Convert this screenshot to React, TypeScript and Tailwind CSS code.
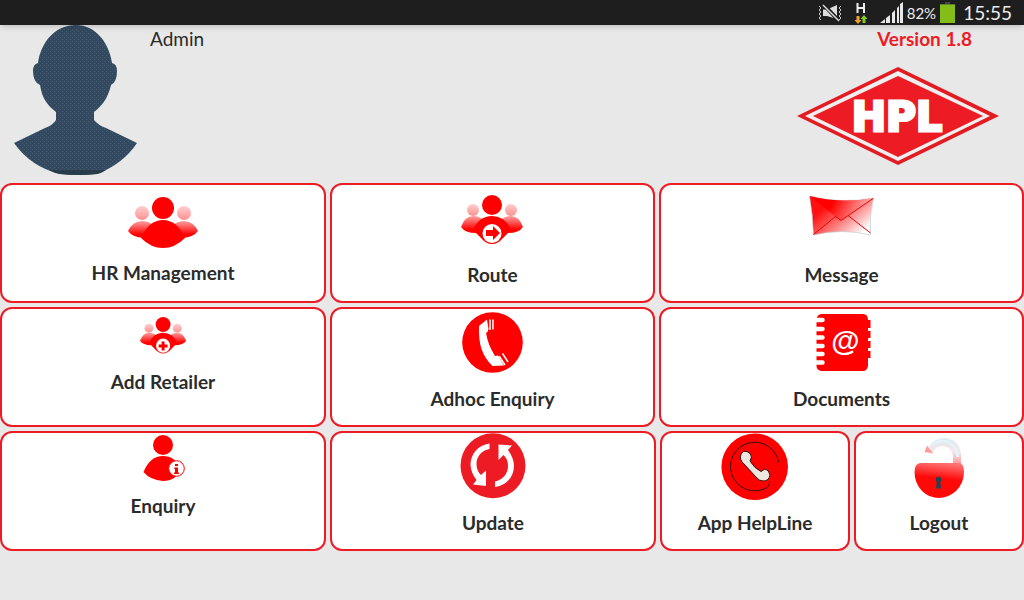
import type { ReactNode } from "react";

type TileProps = {
  label: string;
  iconClass?: string;
  children: ReactNode;
};

const Tile = ({ label, iconClass = "h-[78px]", children }: TileProps) => (
  <button
    type="button"
    className="flex h-[120px] min-w-0 flex-col items-center rounded-xl border-2 border-[#ed1c24] bg-white"
  >
    <span className={`block w-24 shrink-0 ${iconClass}`}>{children}</span>
    <span className="text-[19px] leading-6 font-bold whitespace-nowrap">{label}</span>
  </button>
);

const svgClass = "block h-full w-full overflow-visible";

const HrIcon = () => (
  <svg viewBox="0 0 96 76" className={svgClass} aria-hidden="true">
    <defs>
      <linearGradient id="fade" x1="0" y1="0" x2="0" y2="1">
        <stop offset="0" stopColor="#ffa0a0" />
        <stop offset="0.8" stopColor="#ff0000" />
      </linearGradient>
      <linearGradient id="pale" x1="0" y1="0" x2="0" y2="1">
        <stop offset="0" stopColor="#ffd0d0" />
        <stop offset="1" stopColor="#ff9090" />
      </linearGradient>
    </defs>
    <circle cx="27" cy="28" r="7" fill="url(#pale)" />
    <circle cx="69" cy="28" r="7" fill="url(#pale)" />
    <path d="M13 46 Q18 36 27 36 Q33 36 38 40 L29 53 Q17 52 13 46Z" fill="url(#fade)" />
    <path d="M83 46 Q78 36 69 36 Q63 36 58 40 L67 53 Q79 52 83 46Z" fill="url(#fade)" />
    <path d="M26 53 Q34 35 48 35 Q62 35 70 53 Q60 63 48 63 Q36 63 26 53Z" fill="#f00" />
    <circle cx="48" cy="23" r="11" fill="#f00" />
  </svg>
);

// group of three people, 62 x 49, with a white badge at the bottom
const People = ({ children }: { children: ReactNode }) => (
  <>
    <circle cx="12" cy="15" r="6" fill="url(#pale)" />
    <circle cx="50" cy="15" r="6" fill="url(#pale)" />
    <path d="M0 32 Q4 21 12 21 Q19 21 23 26 L15 38 Q4 38 0 32Z" fill="url(#fade)" />
    <path d="M62 32 Q58 21 50 21 Q43 21 39 26 L47 38 Q58 38 62 32Z" fill="url(#fade)" />
    <path d="M12 35 Q18 21 31 21 Q44 21 50 35 L42 43 Q37 49 31 49 Q25 49 20 43Z" fill="#f00" />
    <circle cx="31" cy="10" r="10" fill="#f00" />
    <circle cx="31" cy="38.500" r="9.500" fill="#fff" />
    {children}
  </>
);

const RouteIcon = () => (
  <svg viewBox="0 0 96 78" className={svgClass} aria-hidden="true">
    <g transform="translate(16 10)">
      <People>
        <path d="M25 35h7v-4l7 7-7 7v-4h-7z" fill="#f00" />
      </People>
    </g>
  </svg>
);

const RetailerIcon = () => (
  <svg viewBox="0 0 96 61" className={svgClass} aria-hidden="true">
    <g transform="translate(25 8) scale(0.745)">
      <People>
        <path d="M29 33h4v4h4v4h-4v4h-4v-4h-4v-4h4z" fill="#f00" />
      </People>
    </g>
  </svg>
);

const MessageIcon = () => (
  <svg viewBox="0 0 96 78" className={svgClass} aria-hidden="true">
    <defs>
      <linearGradient id="paper" x1="0" y1="0" x2="1" y2="0.7">
        <stop offset="0.3" stopColor="#ff1010" />
        <stop offset="0.65" stopColor="#ff8080" />
        <stop offset="1" stopColor="#fff" />
      </linearGradient>
      <linearGradient id="flap" x1="0" y1="0" x2="1" y2="0.2">
        <stop offset="0.4" stopColor="#f00" />
        <stop offset="1" stopColor="#ffb8b8" />
      </linearGradient>
    </defs>
    <path
      d="M15.500 11 Q47 19 79.500 13 Q75 31 76.500 50 Q48 43 19.500 50 Q19 30 15.500 11Z"
      fill="url(#paper)"
      stroke="#b9c6cc"
      strokeWidth="0.600"
    />
    <path d="M15.500 11 Q47 19 79.500 13 L54 30.500 47 35.500 41.500 31.500Z" fill="url(#flap)" />
    <path
      d="M19.500 49.500 L41.500 31.500 L47 35.500 L79 13.500 M54 30.500 L76.500 48"
      fill="none"
      stroke="#e80000"
      strokeWidth="1"
    />
  </svg>
);

const PhoneIcon = () => (
  <svg viewBox="0 0 96 78" className={svgClass} aria-hidden="true">
    <circle cx="47.500" cy="33.500" r="30.300" fill="#f00" />
    <path
      d="M34 17 L42 10.500 L43.500 20 Q43 23 41 24 Q43 36 50 47 L53 46.500 L59 56.500 L47.500 57 Q40 50 36.500 40 Q33.500 31 34 17Z"
      fill="#fff"
    />
    <path d="M45 10.500V21 M48 10.500V20.500 M54 47L60 56 M57.500 44.500L63 53" stroke="#fff" strokeWidth="1.500" />
  </svg>
);

const DocumentsIcon = () => (
  <svg viewBox="0 0 96 78" className={svgClass} aria-hidden="true">
    <path
      d="M27 5H69Q74 5 74 11H76.500V19H74V22H76.500V29H74V32H76.500V39H74V42H76.500V49H74V57Q73 62 69 62H27Q22.500 61 22.500 57V10Q23 6 27 5Z"
      fill="#f00"
    />
    <path
      d="M22 11H28.500 M22 20H28.500 M22 28.500H28.500 M22 37H28.500 M22 45H28.500 M22 53.500H28.500"
      stroke="#fff"
      strokeWidth="4.500"
      strokeLinecap="round"
    />
    <text x="51.500" y="42" textAnchor="middle" fill="#fff" fontSize="29" fontWeight="700" fontFamily="Liberation Sans, sans-serif">
      @
    </text>
  </svg>
);

const EnquiryIcon = () => (
  <svg viewBox="0 0 96 61" className={svgClass} aria-hidden="true">
    <circle cx="48" cy="12" r="10" fill="#f00" />
    <path d="M28.500 39 Q35 23 48 23 Q60 23 66 36 Q61 48 48 48 Q35 47 28.500 39Z" fill="#f00" />
    <circle cx="61.500" cy="35.500" r="7.800" fill="#fff" stroke="#f00" strokeWidth="1" />
    <path d="M60 31h3v2h-3z M59.500 34.500h3.500v5h1v1.500h-5v-1.500h1v-3.500h-1z" fill="#f00" />
  </svg>
);

const UpdateIcon = () => (
  <svg viewBox="0 0 96 78" className={svgClass} aria-hidden="true">
    <circle cx="48" cy="32.700" r="32.500" fill="#ed1c24" />
    <path
      d="M44.500 10.500 C33 12 25.500 21 25.500 32 Q26 40 31.500 47 L28 51.500 L41 53 V37.500 L36 42 Q31.500 38 31.500 31 C31.500 23 37 17.500 44.500 16Z"
      fill="#fff"
    />
    <path
      d="M50 54 C62 52.500 69 43.500 69 32.500 Q68.500 24.500 63 17 L67 12.500 L53.500 11.500 V27 L58.500 22 Q63 26 63 33 C63 41 57.500 47 50 48.500Z"
      fill="#fff"
    />
  </svg>
);

const HelpIcon = () => (
  <svg viewBox="0 0 96 78" className={svgClass} aria-hidden="true">
    <circle cx="47.700" cy="33.700" r="33.300" fill="#f00" />
    <path d="M71.700 29.300 A24.300 24.300 0 1 0 57 56 Q63 54 62.500 48" fill="none" stroke="#301010" strokeWidth="1" />
    <path
      d="M34 21 Q36 17 40 18.500 Q44 20 44.500 24 L43 28 Q47 35 54 38.500 L58 36 Q62 37 63 42 Q62 48 56 48 Q52 48 49 44 L37 31 Q32 27 34 21Z"
      fill="#ece6de"
      stroke="#301010"
      strokeWidth="1"
    />
  </svg>
);

const LogoutIcon = () => (
  <svg viewBox="0 0 96 78" className={svgClass} aria-hidden="true">
    <defs>
      <linearGradient id="lock" x1="0.6" y1="0" x2="0.450" y2="1">
        <stop offset="0" stopColor="#ff7474" />
        <stop offset="0.45" stopColor="#ff0808" />
      </linearGradient>
      <linearGradient id="shackle" x1="0" y1="0" x2="0" y2="1">
        <stop offset="0" stopColor="#dfe8ef" />
        <stop offset="0.5" stopColor="#f7e6e8" />
        <stop offset="1" stopColor="#ff8a8a" />
      </linearGradient>
    </defs>
    <path
      d="M62 31 V23 Q60 13 51 13 Q45 13 42 19 L42 21 L33.500 19 L36 12 L38 14 Q43 5 54 5 Q70 7 70 24 V33Z"
      fill="url(#shackle)"
    />
    <path d="M41 12 Q48 6 57 9 Q66 13 67 24" fill="none" stroke="#e2f3fa" strokeWidth="3" />
    <path d="M33.500 19 L36 13 L42 20Z" fill="#f99" />
    <path d="M29 30H68Q73 30 73 39Q73 50 65 58Q57 65 48 65Q38 65 31 58Q23.500 50 23.500 39Q23.500 31 29 30Z" fill="url(#lock)" />
    <circle cx="47.500" cy="46.500" r="2.800" fill="#1f4455" />
    <path d="M46 47H49L50 55.500H45Z" fill="#1f4455" />
  </svg>
);

const StatusBar = () => (
  <div className="relative z-10 flex h-[25px] items-center justify-end bg-[#1e1e1e] pr-3 text-[#ebebeb] shadow-md">
    <svg viewBox="0 0 24 18" className="mr-3 h-[18px] w-6" aria-hidden="true">
      <path d="M5 5.500H9L19 1V15L9 12H5Z" fill="#ddd" />
      <path d="M5 0L22 18" stroke="#1e1e1e" strokeWidth="4" />
      <path d="M5 1L21 17" stroke="#ddd" strokeWidth="1.500" />
      <path d="M1 2l2 2-2 2 2 2-2 2 2 2-2 2 2 2 M23 2l-2 2 2 2-2 2 2 2-2 2 2 2-2 2" fill="none" stroke="#ccc" strokeWidth="1" />
    </svg>
    <svg viewBox="0 0 14 24" className="mr-3 h-6 w-3.5" aria-hidden="true">
      <path d="M3.500 2v10 M10 2v10 M3.500 7h6.500" stroke="#eee" strokeWidth="2" />
      <path d="M2.500 15h3v4h2L4 23 0.500 19h2z" fill="#f0a030" />
      <path d="M8.500 22h3v-4h2L10 14 6.500 18h2z" fill="#7fce1c" />
    </svg>
    <svg viewBox="0 0 23 21" className="mr-1 h-[21px] w-[23px]" aria-hidden="true">
      <path d="M0 21L5 17V21Z M6 16l4-3v8H6z M12 11l3-3v13h-3z M17 6l2-2v17h-2z M20 2l3-2v21h-3z" fill="#e8e8e8" />
    </svg>
    <span className="mr-1 text-[15px] leading-6">82%</span>
    <svg viewBox="0 0 15 21" className="mr-2 h-[21px] w-[15px]" aria-hidden="true">
      <path d="M5 0h5v2h5v2H0V2h5z" fill="#444" />
      <path d="M0 2.500h15V21H0z" fill="#84bd17" />
    </svg>
    <span className="text-[19px] leading-6">15:55</span>
  </div>
);

const Avatar = () => (
  <svg viewBox="0 0 150 150" className="size-[150px] shrink-0" role="img" aria-label="Profile">
    <defs>
      <pattern id="weave" width="4" height="4" patternUnits="userSpaceOnUse">
        <path d="M0 0h4v4H0z" fill="#34495e" />
        <path d="M0 0h1v1H0z M2 2h1v1H2z" fill="#3b6268" />
        <path d="M2 0h1v1H2z M0 2h1v1H0z" fill="#39436b" />
      </pattern>
    </defs>
    <path
      d="M76 0 C95 0 109 17 112 38 Q117 39 117 46 Q117 57 111 60 C108 73 102 81 94 87 V95 Q98 100 106 103 L137 118 Q123 139 97 149 Q78 151 60 149 Q31 142 14 118 L45 103 Q53 100 56 95 V87 C47 80 42 73 40 60 Q33 57 33 46 Q33 39 38 38 C41 17 55 0 76 0Z"
      fill="url(#weave)"
    />
    <path d="M49 145 H106 Q102 148 97 149 Q78 151 60 149 Q54 148 49 145Z" fill="#283d4b" />
  </svg>
);

const Logo = () => (
  <svg viewBox="0 0 204 98" className="h-[98px] w-[204px]" role="img" aria-label="HPL">
    <path d="M102 0 L203 49 L102 98 L1 49Z" fill="#e31b23" />
    <path d="M102 4 L194 49 L102 94 L9 49Z" fill="#efefef" />
    <path d="M102 9 L187 49 L102 90 L17 49Z" fill="#ed1c24" />
    <text
      x="101"
      y="64"
      textAnchor="middle"
      fill="#fff"
      stroke="#fff"
      strokeWidth="3"
      fontSize="41"
      fontWeight="700"
      fontFamily="DejaVu Sans, sans-serif"
    >
      HPL
    </text>
  </svg>
);

export default function App() {
  return (
    <div className="min-h-screen bg-[#e8e8e8] font-['Lato',sans-serif] text-[#2b2b2b]">
      <StatusBar />
      <header className="flex h-[158px] items-start justify-between pr-6">
        <div className="flex">
          <Avatar />
          <p className="pt-0.5 text-[19px] leading-6">Admin</p>
        </div>
        <div className="flex flex-col">
          <p className="mb-4 self-end pt-0.5 pr-7 text-[19px] leading-6 font-bold text-[#ed1c24]">Version 1.8</p>
          <Logo />
        </div>
      </header>

      <main className="flex flex-col gap-1">
        <div className="grid grid-cols-[326fr_325fr_365fr] gap-1">
          <Tile label="HR Management" iconClass="h-[76px]">
            <HrIcon />
          </Tile>
          <Tile label="Route">
            <RouteIcon />
          </Tile>
          <Tile label="Message">
            <MessageIcon />
          </Tile>
          <Tile label="Add Retailer" iconClass="h-[61px]">
            <RetailerIcon />
          </Tile>
          <Tile label="Adhoc Enquiry">
            <PhoneIcon />
          </Tile>
          <Tile label="Documents">
            <DocumentsIcon />
          </Tile>
        </div>
        {/* the last row has four tiles */}
        <div className="grid grid-cols-[326fr_326fr_190fr_170fr] gap-1">
          <Tile label="Enquiry" iconClass="h-[61px]">
            <EnquiryIcon />
          </Tile>
          <Tile label="Update">
            <UpdateIcon />
          </Tile>
          <Tile label="App HelpLine">
            <HelpIcon />
          </Tile>
          <Tile label="Logout">
            <LogoutIcon />
          </Tile>
        </div>
      </main>
    </div>
  );
}
